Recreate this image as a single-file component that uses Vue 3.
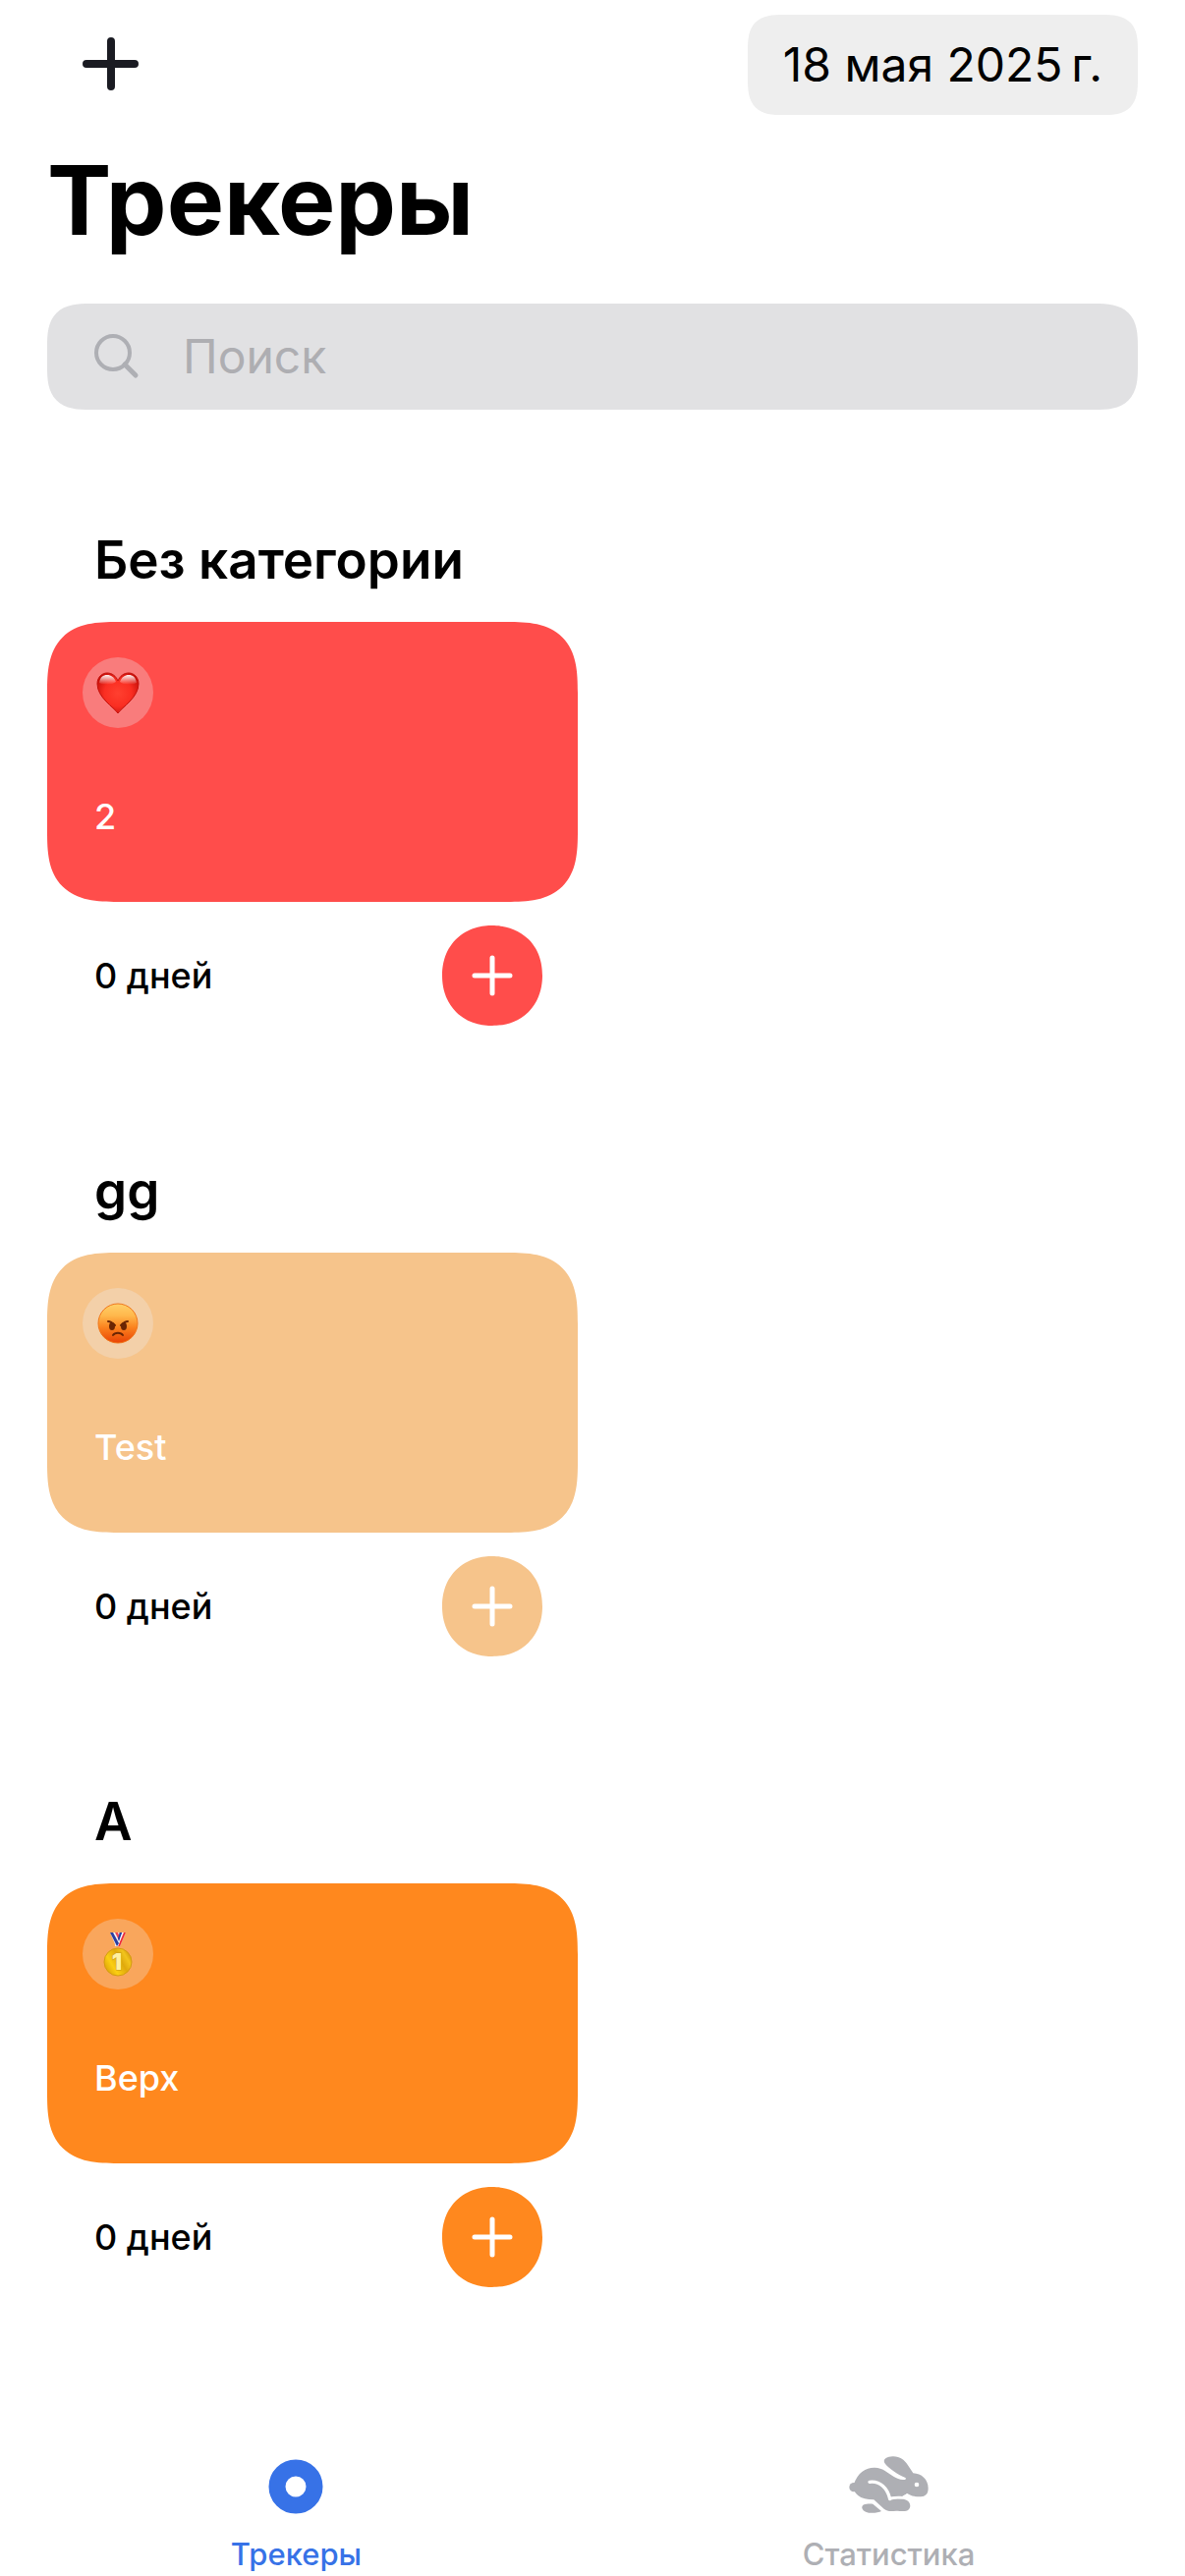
<script setup>
import { ref } from 'vue'

const search = ref('')

const categories = [
  { title: 'Без категории', tracker: { name: '2', emoji: 'heart', color: '#ff4d4b' } },
  { title: 'gg', tracker: { name: 'Test', emoji: 'angry', color: '#f6c48b' } },
  { title: 'A', tracker: { name: 'Верх', emoji: 'medal', color: '#ff881e' } },
]
</script>

<template>
  <div class="page">
    <header class="header">
      <div class="toolbar">
        <button class="add" type="button" aria-label="Добавить трекер">
          <svg width="58" height="58" viewBox="0 0 58 58" aria-hidden="true">
            <path d="M29 5V51M4 28H53" stroke="#1a1b22" stroke-width="8" stroke-linecap="round" />
          </svg>
        </button>
        <button class="date" type="button">18 мая 2025&#8239;г.</button>
      </div>
      <h1 class="title">Трекеры</h1>
      <label class="search">
        <svg width="48" height="48" viewBox="0 0 48 48" fill="none" stroke="#aeafb4" aria-hidden="true">
          <circle cx="19" cy="20" r="17" stroke-width="4" />
          <path d="M31 32L42 43" stroke-width="5" stroke-linecap="round" />
        </svg>
        <input v-model="search" type="text" placeholder="Поиск" aria-label="Поиск" />
      </label>
    </header>

    <main class="list">
      <section v-for="category in categories" :key="category.title" class="category">
        <h2 class="category-title">{{ category.title }}</h2>
        <div class="grid">
          <article class="tracker" :style="{ '--tint': category.tracker.color }">
            <div class="card">
              <span class="emoji">
                <svg v-if="category.tracker.emoji === 'heart'" viewBox="0 0 72 72" role="img" aria-label="Сердце">
                  <defs>
                    <radialGradient id="heart-fill" cx="0.5" cy="0.5" r="0.6">
                      <stop offset="0" stop-color="#ff4030" />
                      <stop offset="0.55" stop-color="#fa2e22" />
                      <stop offset="1" stop-color="#c40d08" />
                    </radialGradient>
                    <linearGradient id="heart-shine" x1="0" y1="0" x2="0" y2="1">
                      <stop offset="0" stop-color="#fff" stop-opacity="0.95" />
                      <stop offset="1" stop-color="#fff" stop-opacity="0" />
                    </linearGradient>
                  </defs>
                  <path d="M36 57C32 51 15 41 15 27C15 20 20 16 25 16C30 16 34 19 36 24C38 19 42 16 47 16C52 16 57 20 57 27C57 41 40 51 36 57Z" fill="url(#heart-fill)" stroke="#c4120c" stroke-width="1" />
                  <path d="M17 26C18 20 21 18 25 18C29 18 32 20 34 25C29 29 21 28 17 26ZM38 25C40 20 43 18 47 18C51 18 54 20 55 26C51 28 43 29 38 25Z" fill="url(#heart-shine)" />
                </svg>
                <svg v-else-if="category.tracker.emoji === 'angry'" viewBox="0 0 72 72" role="img" aria-label="Злость">
                  <defs>
                    <linearGradient id="angry-fill" x1="0" y1="0" x2="0" y2="1">
                      <stop offset="0" stop-color="#ffd068" />
                      <stop offset="0.3" stop-color="#ffb84c" />
                      <stop offset="0.6" stop-color="#fb831f" />
                      <stop offset="1" stop-color="#e94205" />
                    </linearGradient>
                  </defs>
                  <circle cx="36" cy="36" r="20" fill="url(#angry-fill)" stroke="#f0771c" stroke-width="1" />
                  <g fill="none" stroke="#6b2503" stroke-linecap="round">
                    <path d="M26 34C28 34 31 36 33 38M46 34C44 34 41 36 39 38" stroke-width="2" />
                    <path d="M31 48C33 45 39 45 41 48" stroke-width="2" />
                  </g>
                  <ellipse cx="30" cy="39" rx="3" ry="4" fill="#6b2503" />
                  <ellipse cx="42" cy="39" rx="3" ry="4" fill="#6b2503" />
                </svg>
                <svg v-else viewBox="0 0 72 72" role="img" aria-label="Золотая медаль">
                  <defs>
                    <linearGradient id="medal-fill" x1="0" y1="0.8" x2="1" y2="0.2">
                      <stop offset="0" stop-color="#d89c08" />
                      <stop offset="0.3" stop-color="#fbcf12" />
                      <stop offset="0.6" stop-color="#e0a90c" />
                      <stop offset="0.8" stop-color="#f2c41c" />
                      <stop offset="1" stop-color="#cf9208" />
                    </linearGradient>
                  </defs>
                  <path d="M38 14H44L38 28H33Z" fill="#f4f4fa" />
                  <path d="M42 14H44L38 28H36Z" fill="#ee2b36" />
                  <path d="M38 14H40L35 27L33 24Z" fill="#2b3f9f" />
                  <path d="M28 14H37L39 20L36 28H34Z" fill="#f4f4fa" />
                  <path d="M28 14H31L37 25L35 28Z" fill="#2b3f9f" />
                  <path d="M33 14H36L38 19L37 22Z" fill="#ee4a55" />
                  <path d="M38 14H40L37 23L36 20Z" fill="#2b3f9f" />
                  <circle cx="36" cy="44" r="14" fill="url(#medal-fill)" stroke="#d49c10" stroke-width="1" />
                  <text x="35" y="52" class="medal-digit">1</text>
                </svg>
              </span>
              <p class="name">{{ category.tracker.name }}</p>
            </div>
            <div class="footer">
              <span class="days">0 дней</span>
              <button class="done" type="button" aria-label="Отметить выполнение">
                <svg width="42" height="42" viewBox="0 0 42 42" aria-hidden="true">
                  <path d="M21 3V39M3 21H39" stroke="#fff" stroke-width="5" stroke-linecap="round" />
                </svg>
              </button>
            </div>
          </article>
        </div>
      </section>
    </main>

    <nav class="tabs">
      <a class="tab active" href="#trackers" aria-current="page">
        <svg width="82" height="60" viewBox="0 0 82 60" aria-hidden="true">
          <circle cx="40" cy="32" r="19" fill="none" stroke="currentColor" stroke-width="17" />
        </svg>
        <span>Трекеры</span>
      </a>
      <a class="tab" href="#statistics">
        <svg width="82" height="60" viewBox="191 86 246 180" aria-hidden="true">
          <g fill="currentColor">
            <circle cx="206" cy="184" r="14" />
            <path d="M206 174C218 138 244 123 270 124C282 124 292 128 300 133C318 145 336 159 356 161C364 162 368 157 362 154C340 145 312 127 300 110C294 100 304 91 324 90C346 89 360 100 372 118L387 141C412 142 433 160 433 187C433 205 424 213 405 213C390 213 377 209 369 203L354 212C343 210 331 211 320 214L316 223C330 221 345 218 360 221C384 226 383 256 362 257C350 258 345 256 335 256C318 258 308 258 298 250L267 222C236 222 214 213 206 192Z" />
            <path d="M231 247C230 236 242 234 264 235L290 257C277 264 236 268 231 247Z" />
          </g>
          <path d="M254 168C287 164 309 188 316 220" fill="none" stroke="#fff" stroke-width="10" stroke-linecap="round" />
          <path d="M316 218C332 214 344 215 354 216L370 207" fill="none" stroke="#fff" stroke-width="7" />
          <circle cx="398" cy="176" r="7" fill="#fff" />
        </svg>
        <span>Статистика</span>
      </a>
    </nav>
  </div>
</template>

<style>
body {
  margin: 0;
  background: #fff;
}
</style>

<style scoped>
.page {
  display: flex;
  flex-direction: column;
  min-height: 100vh;
  font-family: Inter, "Liberation Sans", sans-serif;
  color: #000;
}

button {
  padding: 0;
  border: 0;
  background: none;
  color: inherit;
  font: inherit;
}

svg {
  display: block;
  flex: none;
}

.header {
  display: flex;
  flex-direction: column;
  padding: 15px 48px 0;
}

.toolbar {
  display: flex;
  align-items: center;
  justify-content: space-between;
  padding-left: 36px;
}

.date {
  height: 102px;
  padding: 0 36px;
  border-radius: 24px;
  background: #eee;
  font-size: 48px;
  line-height: 60px;
}

.title {
  margin: 27px 0 45px;
  font-size: 98px;
  font-weight: 700;
  line-height: 120px;
}

.search {
  display: flex;
  align-items: center;
  gap: 42px;
  height: 108px;
  padding: 0 48px;
  border-radius: 30px;
  background: #e1e1e3;
}

.search input {
  flex: 1;
  min-width: 0;
  padding: 0;
  border: 0;
  outline: 0;
  background: none;
  color: #000;
  font: inherit;
  font-size: 48px;
  line-height: 60px;
}

.search input::placeholder {
  color: #aeaeb2;
  opacity: 1;
}

.list {
  display: flex;
  flex: 1;
  flex-direction: column;
  gap: 135px;
  padding: 120px 48px 60px;
}

.category-title {
  margin: 0 0 30px;
  padding: 0 48px;
  font-size: 53px;
  font-weight: 600;
  line-height: 66px;
}

.grid {
  display: grid;
  grid-template-columns: 1fr 1fr;
  gap: 30px;
}

.card {
  display: flex;
  flex-direction: column;
  justify-content: space-between;
  box-sizing: border-box;
  height: 285px;
  padding: 36px 36px 60px;
  border-radius: 52px;
  background: var(--tint);
}

.emoji {
  width: 72px;
  height: 72px;
  border-radius: 50%;
  background: rgba(236, 236, 240, 0.3);
}

.medal-digit {
  fill: #fff0a0;
  stroke: #c99a1c;
  stroke-width: 1px;
  paint-order: stroke;
  font-size: 23px;
  font-weight: 900;
  text-anchor: middle;
}

.name {
  margin: 0;
  padding: 0 12px;
  color: #fff;
  font-size: 36px;
  font-weight: 500;
  line-height: 54px;
}

.footer {
  display: flex;
  align-items: center;
  justify-content: space-between;
  padding: 24px 36px 0 48px;
}

.days {
  font-size: 36px;
  font-weight: 500;
  line-height: 54px;
}

.done {
  display: flex;
  align-items: center;
  justify-content: center;
  width: 102px;
  height: 102px;
  border-radius: 50%;
  background: var(--tint);
}

@supports (corner-shape: squircle) {
  .card {
    border-radius: 72px;
    corner-shape: superellipse(1.5);
  }

  .search {
    border-radius: 44px;
    corner-shape: superellipse(1.5);
  }

  .date {
    border-radius: 36px;
    corner-shape: superellipse(1.5);
  }

  .done {
    corner-shape: superellipse(1.1);
  }
}

.tabs {
  display: flex;
  padding-bottom: 3px;
}

.tab {
  display: flex;
  flex: 1;
  flex-direction: column;
  align-items: center;
  gap: 21px;
  color: #aeafb4;
  font-size: 31px;
  font-weight: 500;
  line-height: 39px;
  text-decoration: none;
}

.tab.active {
  color: #3772e7;
}
</style>
